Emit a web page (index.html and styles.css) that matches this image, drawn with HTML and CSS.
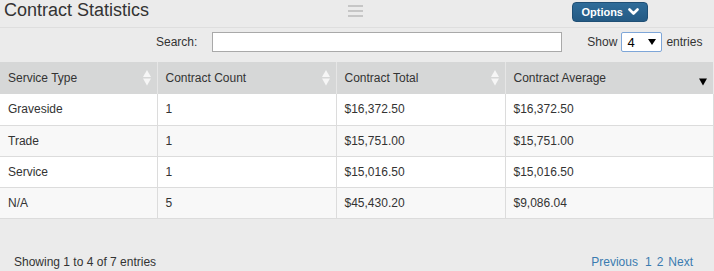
FILE: index.html
```html
<!DOCTYPE html>
<html>
<head>
<meta charset="utf-8">
<link rel="stylesheet" href="styles.css">
</head>
<body>
<div class="panel">
  <div class="topbar">
    <h1 class="title">Contract Statistics</h1>
    <div class="handle">
      <span class="bar"></span><span class="bar"></span><span class="bar"></span>
    </div>
    <div class="actions">
      <button class="btn-options">Options
        <svg class="chev" width="11" height="8" viewBox="0 0 11 8"><polyline points="1.5,1.5 5.5,5.5 9.5,1.5" fill="none" stroke="#fff" stroke-width="2.6" stroke-linecap="round" stroke-linejoin="round"/></svg>
      </button>
    </div>
  </div>
  <div class="controls">
    <label class="search-label">Search:</label>
    <input class="search-input" type="text">
    <div class="length">
      <span>Show</span>
      <span class="select"><span>4</span><svg width="8" height="6" viewBox="0 0 8 6"><polygon points="0,0 8,0 4,6" fill="#000"/></svg></span>
      <span>entries</span>
    </div>
  </div>
  <table class="grid">
    <colgroup>
      <col class="c1"><col class="c2"><col class="c3"><col class="c4">
    </colgroup>
    <thead>
      <tr>
        <th><div class="th-in"><span>Service Type</span><svg class="sort" width="8" height="16" viewBox="0 0 8 16"><polygon points="0,7 4,0 8,7" /><polygon points="0,8.5 8,8.5 4,15.5"/></svg></div></th>
        <th><div class="th-in"><span>Contract Count</span><svg class="sort" width="8" height="16" viewBox="0 0 8 16"><polygon points="0,7 4,0 8,7" /><polygon points="0,8.5 8,8.5 4,15.5"/></svg></div></th>
        <th><div class="th-in"><span>Contract Total</span><svg class="sort" width="8" height="16" viewBox="0 0 8 16"><polygon points="0,7 4,0 8,7" /><polygon points="0,8.5 8,8.5 4,15.5"/></svg></div></th>
        <th><div class="th-in"><span>Contract Average</span><svg class="sort active" width="8" height="16" viewBox="0 0 8 16"><polygon points="0,8.5 8,8.5 4,15.5"/></svg></div></th>
      </tr>
    </thead>
    <tbody>
      <tr><td>Graveside</td><td>1</td><td>$16,372.50</td><td>$16,372.50</td></tr>
      <tr><td>Trade</td><td>1</td><td>$15,751.00</td><td>$15,751.00</td></tr>
      <tr><td>Service</td><td>1</td><td>$15,016.50</td><td>$15,016.50</td></tr>
      <tr><td>N/A</td><td>5</td><td>$45,430.20</td><td>$9,086.04</td></tr>
    </tbody>
  </table>
  <div class="footer">
    <div class="info">Showing 1 to 4 of 7 entries</div>
    <div class="pager">
      <a class="prev">Previous</a><a>1</a><a>2</a><a>Next</a>
    </div>
  </div>
</div>
</body>
</html>
```

FILE: styles.css
```css
* { box-sizing: border-box; }
html, body { margin: 0; padding: 0; }
body {
  background: #ebebeb;
  font-family: "Liberation Sans", Arial, sans-serif;
  font-size: 12px;
  color: #333;
}
.panel { width: 714px; height: 271px; background: #ebebeb; }

.topbar {
  height: 28px;
  display: grid;
  grid-template-columns: 1fr auto 1fr;
  align-items: start;
  border-bottom: 1px solid #dedede;
}
.title {
  margin: 0;
  padding-left: 4px;
  font-size: 18px;
  font-weight: normal;
  line-height: 21px;
  color: #333;
}
.handle {
  display: flex;
  flex-direction: column;
  gap: 3px;
  padding-top: 5px;
  margin-right: 3px;
}
.bar { display: block; width: 15px; height: 2px; background: #c6c6c6; }
.actions { justify-self: end; padding-top: 2px; padding-right: 66px; }
.btn-options {
  display: flex;
  align-items: center;
  gap: 5px;
  height: 20px;
  padding: 0 8px 0 8px;
  border: 1px solid #1f4f75;
  border-radius: 4px;
  background: linear-gradient(#2f6c99, #245a84);
  color: #fff;
  font-family: "Liberation Sans", Arial, sans-serif;
  font-size: 11px;
  font-weight: bold;
}
.chev { display: block; }

.controls {
  height: 34px;
  display: flex;
  align-items: center;
  padding: 0 0 6px 156px;
}
.search-label { margin-right: 15px; }
.search-input {
  width: 350px;
  height: 20px;
  border: 1px solid #a9a9a9;
  background: #fff;
  margin: 0;
  padding: 0 4px;
}
.length {
  display: flex;
  align-items: center;
  gap: 4px;
  margin-left: 25px;
}
.select {
  display: flex;
  align-items: center;
  justify-content: space-between;
  width: 41px;
  height: 20px;
  padding: 0 5px 0 5px;
  border: 1px solid #7ea6d8;
  border-radius: 2px;
  background: #fff;
  color: #000;
  font-size: 13px;
}

.grid {
  width: 713px;
  border-collapse: collapse;
  table-layout: fixed;
}
.c1 { width: 157px; }
.c2 { width: 179px; }
.c3 { width: 169px; }
.c4 { width: 208px; }
.grid th {
  height: 32px;
  padding: 0 6px 0 8px;
  background: #d6d7d7;
  font-weight: normal;
  text-align: left;
  border-left: 1px solid #e6e6e6;
}
.grid th:first-child { border-left: none; }
.th-in {
  display: flex;
  align-items: center;
  justify-content: space-between;
}
.sort { display: block; fill: #f6f6f6; }
.sort.active { fill: #000; }
.grid td {
  height: 31px;
  padding: 0 8px;
  border-left: 1px solid #dcdcdc;
  border-bottom: 1px solid #dcdcdc;
}
.grid td:first-child { border-left: none; }
.grid td:last-child { border-right: 1px solid #dcdcdc; }
.grid tbody tr { background: #fff; }
.grid tbody tr:nth-child(even) { background: #f8f8f8; }

.footer {
  display: flex;
  justify-content: space-between;
  padding: 36px 21px 0 14px;
  line-height: 14px;
}
.pager { display: flex; gap: 5px; }
.pager a { color: #3a7bb0; text-decoration: none; }
.pager .prev { margin-right: 2px; }
```
